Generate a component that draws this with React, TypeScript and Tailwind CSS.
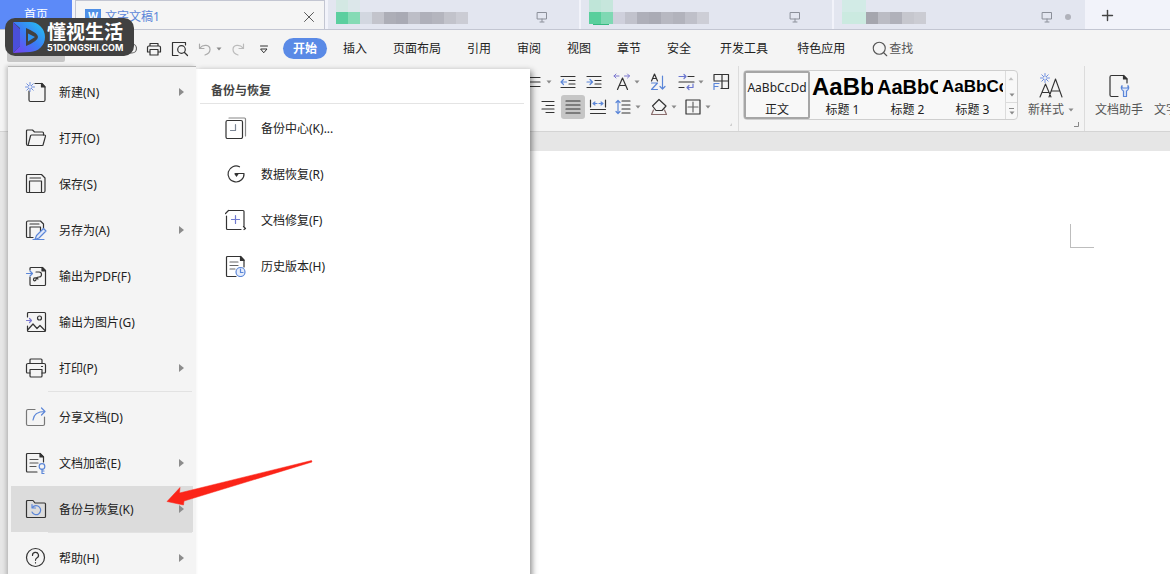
import type { ReactNode } from 'react';
import { Search, X, Plus } from 'lucide-react';

const BLUE = '#5b86d8';

const Svg = ({ children, size = 22, color = '#333' }: { children: ReactNode; size?: number; color?: string }) => (
  <svg width={size} height={size} viewBox={`0 0 ${size} ${size}`} fill="none" stroke={color} strokeWidth="1.2" strokeLinecap="round" strokeLinejoin="round" className="shrink-0">
    {children}
  </svg>
);

const Caret = () => (
  <svg width="6" height="4" viewBox="0 0 6 4" className="shrink-0"><path d="M0.5 0.5h5L3 3.5z" fill="#8a8a8a" /></svg>
);

const Star = ({ x, y }: { x: number; y: number }) => (
  <path transform={`translate(${x} ${y})`} d="M0-4.5V-1.5M0 4.5V1.5M-4.5 0H-1.5M4.5 0H1.5M-3.2-3.2l2 2M3.2 3.2l-2-2M-3.2 3.2l2-2M3.2-3.2l-2 2" stroke="#6f8fe0" strokeWidth="1" />
);

const menuIcons: Record<string, ReactNode> = {
  new: <><path d="M10 2.5h7l3 3.500v13a1.5 1.5 0 0 1-1.500 1.500H5.500a1.500 1.500 0 0 1-1.500-1.500V10" /><path d="M16.500 2.500v3.500h3.500z" fill="#333" /><Star x={5} y={6} /></>,
  open: <><path d="M3 18.500a1.500 1.500 0 0 1-1.500-1.500V4A1 1 0 0 1 2.500 3h5l2 2h8a1 1 0 0 1 1 1v2" /><path d="M3 18.500L5.500 9a1 1 0 0 1 1-1H19.500a1 1 0 0 1 1 1.200l-2.300 8.300a1 1 0 0 1-1 1z" /></>,
  save: <><path d="M2.500 1.500h14l3.500 3.500v13a1.500 1.500 0 0 1-1.500 1.500h-16a1 1 0 0 1-1-1v-16a1 1 0 0 1 1-1z" /><path d="M4.500 19.500V8h12v11.500M5 5h10.500" /></>,
  saveAs: <><path d="M8 18.500H2.500a1 1 0 0 1-1-1v-14a1.500 1.500 0 0 1 1.500-1.500h12.500l3 3v5" /><path d="M5 18.500V8h10.500v4M5 5h9" /><path d="M10 20.500l1.500-4 7-7 2.500 2.500-7 7zM8 20.500h11" stroke={BLUE} fill="#dfe8fa" /></>,
  pdf: <><path d="M5 5V3.500a1 1 0 0 1 1-1h11.500l3 3v14a1 1 0 0 1-1 1H6a1 1 0 0 1-1-1V12" /><path d="M17 2.500v3.500h3.500z" fill="#333" /><path d="M11 7h3a2.500 2.500 0 0 1 0 5c-2 0-3 1-3 2.500s-2.500 2-2.500 0 2.500-2 4.500-.5" /><path d="M1.500 8.500h6M5 6l2.500 2.500L5 11" stroke={BLUE} /></>,
  image: <><path d="M2.500 6V2.500a1 1 0 0 1 1-1h16a1 1 0 0 1 1 1v17a1 1 0 0 1-1 1h-16a1 1 0 0 1-1-1V15" /><circle cx="14.500" cy="7" r="2" /><path d="M3 18.500l5-5.500 4 4.500 3-3 5 5" /><path d="M1.500 9.500h5M4.500 7.500l2 2-2 2" stroke="#7b77cf" /></>,
  print: <><path d="M5 6.500V3a1 1 0 0 1 1-1h10a1 1 0 0 1 1 1v3.500M5 16H2.500a1 1 0 0 1-1-1V8A1.500 1.500 0 0 1 3 6.500h16a1.500 1.500 0 0 1 1.500 1.500v7a1 1 0 0 1-1 1H17M16.500 9.500h1" /><path d="M5 12.500h12V19a1 1 0 0 1-1 1H6a1 1 0 0 1-1-1z" /></>,
  share: <><path d="M10 3.500H3A1.500 1.500 0 0 0 1.500 5v13A1.500 1.500 0 0 0 3 19.500h15a1.500 1.500 0 0 0 1.500-1.500v-7" stroke="#777" /><path d="M8 14c.5-5 4-8.500 12-8.500M16.500 2L20 5.500 16.500 9" stroke={BLUE} /></>,
  lock: <><path d="M12 20H2.500a1 1 0 0 1-1-1V2.500a1 1 0 0 1 1-1h12.500l3.500 3.500v5" /><path d="M15 1.500v3.500h3.500z" fill="#333" /><path d="M5 7.500h8M5 11h8M5 14.500h6" stroke="#555" /><path d="M17 17v4.500M17 19h2M17 21.500h2" stroke={BLUE} /><circle cx="17" cy="14.500" r="2.800" stroke={BLUE} /></>,
  backup: <><path d="M1.500 18.500V3.500a1 1 0 0 1 1-1H8l2 2.500h9.500a1 1 0 0 1 1 1v12.500a1 1 0 0 1-1 1h-17a1 1 0 0 1-1-1z" /><path d="M7.500 9.500a4.500 4.500 0 1 1-.5 4.500M7 6.500v3.500h3.500" stroke={BLUE} /></>,
  help: <><circle cx="10.500" cy="10.500" r="9" /><path d="M7.500 8.500a3 3 0 1 1 4.300 2.500c-.9.500-1.300 1-1.300 2.300M10.500 15.500v.5" /></>,
  center: <><path d="M4 1h15.500a1 1 0 0 1 1 1v17" stroke="#888" /><rect x="1" y="3.500" width="16.500" height="18" rx="1.500" /><path d="M10.500 7.500v6H5.500" stroke="#7d8796" /></>,
  recover: <><path d="M14.500 3.800A8 8 0 1 0 19 10.500H10.500" /><path d="M9 10.500h5l-2.500 3.500z" fill="#333" stroke="none" /></>,
  repair: <><path d="M4 1.500h14a1 1 0 0 1 1 1v15M1.500 7v12.500a1 1 0 0 0 1 1H16M.5 4.500L3.500 1.500M18.500 17.500l2 2-1.500 1" /><path d="M10.500 6.500v8M6.500 10.500h8" stroke="#6f79d0" /></>,
  history: <><path d="M11 21.500H2.500a1 1 0 0 1-1-1v-18a1 1 0 0 1 1-1h13l3.500 3.500v7" /><path d="M15.500 1.500v4H19z" fill="#333" /><path d="M5 7h8M5 10.500h8M5 14h5" stroke="#666" /><circle cx="15.500" cy="17" r="4.500" fill="#e6edfb" stroke={BLUE} /><path d="M15.500 14v3.500h2.500" stroke={BLUE} /></>,
};

const mainMenu = [
  { icon: 'new', label: '新建(N)', arrow: true },
  { icon: 'open', label: '打开(O)' },
  { icon: 'save', label: '保存(S)' },
  { icon: 'saveAs', label: '另存为(A)', arrow: true },
  { icon: 'pdf', label: '输出为PDF(F)' },
  { icon: 'image', label: '输出为图片(G)' },
  { icon: 'print', label: '打印(P)', arrow: true },
  { icon: 'share', label: '分享文档(D)', sep: true },
  { icon: 'lock', label: '文档加密(E)', arrow: true },
  { icon: 'backup', label: '备份与恢复(K)', arrow: true, active: true },
  { icon: 'help', label: '帮助(H)', arrow: true, sep: true },
];

const subMenu = [
  { icon: 'center', label: '备份中心(K)...' },
  { icon: 'recover', label: '数据恢复(R)' },
  { icon: 'repair', label: '文档修复(F)' },
  { icon: 'history', label: '历史版本(H)' },
];

const ribbonTabs = ['插入', '页面布局', '引用', '审阅', '视图', '章节', '安全'];
const extraTabs = ['开发工具', '特色应用'];

const Monitor = () => (
  <Svg size={12} color="#8b8f99"><path d="M1.500 1.500h9v6.500h-9zM6 8v2.500M4 11h4" strokeWidth="1" /></Svg>
);

// Document tab whose title is hidden behind mosaic blocks
const BlurredTab = ({ top, blocks, dot, line }: { top: string[]; blocks: string[]; dot?: boolean; line?: boolean }) => (
  <div className="flex h-[29px] w-[251px] shrink-0 items-start justify-between bg-[#e3e6f0] pl-2">
    <div>
      <div className="flex h-3">{top.map((c, i) => <span key={i} className="w-3" style={{ background: c }} />)}</div>
      <div className="flex h-3">{blocks.map((c, i) => <span key={i} className="w-3" style={{ background: c }} />)}</div>
      {line && <div className="ml-1 h-px w-4 bg-[#35b880]" />}
    </div>
    <div className={dot ? 'flex items-center gap-3 pt-[11px] pr-[14px]' : 'flex items-center pt-[11px] pr-[31px]'}>
      <Monitor />
      {dot && <span className="size-[6px] rounded-full bg-[#b0b2ba]" />}
    </div>
  </div>
);

const Tool = ({ children, name, cls, caret, on }: { children: ReactNode; name: string; cls: string; caret?: boolean; on?: boolean }) => (
  <button aria-label={name} className={`flex h-6 shrink-0 items-center gap-[3px] ${cls} ${on ? 'justify-center rounded-[3px] bg-[#c6c6c6]' : ''}`}>
    <Svg size={18}>{children}</Svg>
    {caret && <Caret />}
  </button>
);

const StyleCard = ({ sample, name, cls }: { sample: string; name: string; cls: string }) => (
  <button className="flex w-[65px] shrink-0 flex-col items-center px-[2px]">
    <span className={`h-8 w-full overflow-hidden text-left leading-8 font-bold whitespace-nowrap text-black ${cls}`}>{sample}</span>
    <span className="leading-[14px]">{name}</span>
  </button>
);

const Watermark = () => (
  <div className="absolute top-[18px] left-[5px] z-30 flex h-[38px] w-[129px] items-center gap-px rounded-[10px] bg-[#414141] pl-[6px] text-white">
    <svg width="35" height="34" viewBox="0 0 35 34">
      <defs>
        <linearGradient id="wm" x1="0" y1="1" x2="1" y2="0">
          <stop offset="0" stopColor="#7a3df0" />
          <stop offset="0.5" stopColor="#3b7cf5" />
          <stop offset="1" stopColor="#22c8f0" />
        </linearGradient>
      </defs>
      <path d="M2 2h17a15 15 0 0 1 0 30L2 33l7-7V8z" fill="url(#wm)" />
      <path d="M2 2l7 7v17l-7 7z" fill="#4a4fd8" />
      <path d="M15 8q12 5 12 9T15 26z" fill="#414141" />
      <path d="M17 13.500l7 3.500-7 4.500z" fill="#2f93f2" />
    </svg>
    <div className="flex flex-col pt-[2px]">
      <span className="text-[19px] leading-5 font-bold">懂视生活</span>
      <span className="font-['Inter',sans-serif] text-[9px] leading-3 font-bold">51DONGSHI.COM</span>
    </div>
  </div>
);

const MenuItem = ({ icon, label, arrow, active }: { icon: string; label: string; arrow?: boolean; active?: boolean }) => (
  <button className={`mx-[3px] flex h-[46px] items-center pr-[9px] pl-[14px] text-left ${active ? 'bg-[#dcdcdc]' : ''}`}>
    <Svg>{menuIcons[icon]}</Svg>
    <span className="ml-3 flex-1 pt-[2px]">{label}</span>
    {arrow && <svg width="5" height="8" viewBox="0 0 5 8"><path d="M0 0l5 4-5 4z" fill="#8c8c8c" /></svg>}
  </button>
);

export default function App() {
  return (
    <div className="relative flex h-screen flex-col overflow-hidden bg-[#e6e6e6] font-['Noto_Sans','Noto_Sans_CJK_SC',sans-serif] text-xs text-[#222]">
      <header className="shrink-0 bg-[#f4f4f4]">
        <div className="flex h-[30px] overflow-hidden border-b border-[#c3c6d2] bg-[#f2f3fa]">
          <button className="h-[29px] w-[72px] shrink-0 bg-[#5c8af8] pt-px text-white">首页</button>
          <div className="ml-[3px] flex h-[30px] w-[250px] shrink-0 items-center border border-b-0 border-[#c3c6d2] bg-[#f5f5f5] pt-[2px] pr-[6px] pl-[9px]">
            <span className="flex size-4 items-center justify-center bg-[#4e8fe6] text-[10px] font-bold text-white">W</span>
            <span className="ml-1 flex-1 text-[#5b86d8]">文字文稿1</span>
            <button aria-label="关闭"><X size={18} strokeWidth={1.3} color="#555" /></button>
          </div>
          <div className="ml-[3px] flex shrink-0 gap-[2px]">
            <BlurredTab
              top={['#d3e8e3', '#dce7ea']}
              blocks={['#5bcf9f', '#85dbb5', '#d2d7e0', '#c3c4cc', '#adaeb7', '#a9aab4', '#bdbec7', '#afb0ba', '#b4b5be', '#c2c3cb', '#cbccd4']}
            />
            <BlurredTab
              line
              top={['#bfe5d8', '#c6e6dc']}
              blocks={['#58cf9c', '#7fd8b3', '#cfd0dc', '#c1c2cc', '#aeafb9', '#aaabb5', '#b7b8c1', '#b2b3bc', '#bfc0c9', '#cdced6']}
            />
            <BlurredTab
              dot
              top={['#d2ebe6', '#d2ebe6']}
              blocks={['#cbeae0', '#cbeae0', '#a5a6ae', '#bbbcc4', '#b0b1ba', '#c6c7ce', '#cbccd3']}
            />
          </div>
          <button aria-label="新建标签" className="shrink-0 pt-px pl-[14px]"><Plus size={17} strokeWidth={2} color="#444" /></button>
        </div>

        <nav className="flex h-9 items-center overflow-hidden pt-px whitespace-nowrap">
          <div className="flex w-[283px] shrink-0 items-center pl-[7px]">
            <button aria-label="文件" className="mt-1 h-[22px] w-[58px] rounded-[2px] bg-[#c6c6c6]" />
            <button aria-label="输出" className="mx-2 ml-[54px]"><Svg size={18} color="#666"><path d="M8 4h5a4 4 0 0 1 0 9H8" /></Svg></button>
            <button aria-label="打印"><Svg size={18}><path d="M5 6V3.500h8V6M5 12H2.500V7.500A1.500 1.500 0 0 1 4 6h10a1.500 1.500 0 0 1 1.500 1.500V12H13M5 9.500h8v5.500H5z" /></Svg></button>
            <button aria-label="打印预览" className="ml-2"><Svg size={18}><path d="M7 15.500H1.500v-13h13V5" /><circle cx="10.500" cy="9.500" r="3.800" /><path d="M13.500 12.500l3 3" /></Svg></button>
            <button aria-label="撤销" className="ml-2 flex items-center gap-[3px]"><Svg size={16} color="#aaa"><path d="M2.500 3v4.500H7M3 7c3-4 10-3.500 10 1.500 0 2.500-2 4.500-5 5.500" /></Svg><Caret /></button>
            <button aria-label="恢复" className="ml-2"><Svg size={16} color="#bbb"><path d="M13.500 3v4.500H9M13 7C10 3 3 3.500 3 8.500c0 2.500 2 4.500 5 5.500" /></Svg></button>
            <button aria-label="更多" className="ml-3"><Svg size={12}><path d="M2.500 3h7M3 6h6L6 9.500z" strokeWidth="1" /></Svg></button>
          </div>
          <button className="h-[21px] w-11 shrink-0 rounded-full bg-[#5a8ae6] font-bold text-white">开始</button>
          <div className="ml-4 flex gap-[26px] pt-px">
            {ribbonTabs.map(t => <button key={t}>{t}</button>)}
          </div>
          <div className="ml-[29px] flex gap-[29px] pt-px">
            {extraTabs.map(t => <button key={t}>{t}</button>)}
          </div>
          <button className="ml-[26px] flex shrink-0 items-center text-[#555]"><Search size={18} strokeWidth={1.5} />查找</button>
        </nav>

        <div className="flex h-[66px] overflow-hidden border-b border-[#d4d4d4] pl-[525px] whitespace-nowrap">
          <div className="flex w-[214px] shrink-0 items-end border-r border-[#dcdcdc]">
            <div className="flex-1 self-start pt-1">
              <div className="flex">
                <Tool name="项目符号" cls="w-[34px]" caret><path d="M1 4.500h14M1 9h14M1 13.500h14" /></Tool>
                <Tool name="减少缩进" cls="w-[26px]"><path d="M2 3.500h14M10 7.500h6M10 11h6M2 14.500h14" /><path d="M7.500 9H2M4.500 6.500L2 9l2.500 2.500" stroke={BLUE} /></Tool>
                <Tool name="增加缩进" cls="w-7"><path d="M2 3.500h14M10 7.500h6M10 11h6M2 14.500h14" /><path d="M2 9h5.500M5 6.500L7.500 9 5 11.500" stroke={BLUE} /></Tool>
                <Tool name="中文版式" cls="w-9" caret><path d="M4.500 16.500L9.500 5l5 11.500M6.500 12.500h6" /><path d="M1 3h5M3 1L1 3l2 2M16.500 3h-5M14.500 1l2 2-2 2" stroke="#7b77cf" strokeWidth="1" /></Tool>
                <Tool name="排序" cls="w-7"><path d="M2.500 8L5.500 1l3 7M3.500 5.500h4" /><path d="M2.500 10h6l-6 6.500h6M13.500 3v13M11 13.500l2.500 2.500 2.500-2.500" stroke={BLUE} /></Tool>
                <Tool name="制表符" cls="w-[35px]" caret><path d="M11 3.500h6M2 9h15M2 14.500h5" /><path d="M2 3.500h7M7 1.500l2 2-2 2M16 11v3.500h-6M12 12.500l-2 2 2 2" stroke="#6a76cf" /></Tool>
                <Tool name="文字框" cls="w-[18px]"><path d="M2 7V1.500h14.500v14H9M10 1.500v14M2 8h14.500" /><path d="M2 16.500v-6h5M2 13.500h4" stroke={BLUE} /></Tool>
              </div>
              <div className="flex pt-px">
                <Tool name="右对齐" cls="ml-[14px] w-[22px]"><path d="M3 3.500h12M7 7.500h8M3 11h12M7 14.500h8" /></Tool>
                <Tool name="两端对齐" cls="w-6" on><path d="M2 3h14M2 7h14M2 11h14M2 15h14" /></Tool>
                <Tool name="分散对齐" cls="ml-1 w-[25px]"><path d="M1.500 2v7M16.500 2v7M1.500 11.500h15M1.500 15.500h15" /><path d="M4 5.500h4M6 4L4 5.500 6 7M14 5.500h-4M12 4l2 1.500L12 7" stroke={BLUE} /></Tool>
                <Tool name="行距" cls="w-9" caret><path d="M8 3h8M8 7h8M8 11h8M8 15h8" /><path d="M4 2.500v13M2 4.500l2-2 2 2M2 13.500l2 2 2-2" stroke={BLUE} /></Tool>
                <Tool name="底纹" cls="w-[34px]" caret><path d="M9 1.500l7 6.500-4 4.500H6L2.500 8z" /><path d="M3.500 12l-2 4.500h15l-2-4.500" stroke="#8a6d6d" /></Tool>
                <Tool name="边框" cls="w-8" caret><path d="M2 2h14v14H2z" /><path d="M9 4v10M4 9h10" stroke="#666" /></Tool>
              </div>
            </div>
            <svg width="5" height="5" viewBox="0 0 5 5" className="mr-[6px] mb-1"><path d="M0 4.500h4.500V0" fill="none" stroke="#888" /></svg>
          </div>

          <div className="mt-1 ml-1 flex h-[50px] shrink-0 self-start rounded border border-[#cfcfcf] bg-[#f8f8f8]">
            <button className="flex w-[66px] shrink-0 flex-col items-center rounded-[2px] border-2 border-[#a6a6a6]">
              <span className="leading-[30px]">AaBbCcDd</span>
              <span className="leading-[14px]">正文</span>
            </button>
            <StyleCard sample="AaBb" name="标题 1" cls="text-[24px] font-['Liberation_Sans',sans-serif]" />
            <StyleCard sample="AaBbC" name="标题 2" cls="text-[20px] font-['Liberation_Sans',sans-serif]" />
            <StyleCard sample="AaBbCc" name="标题 3" cls="text-[17px] font-['Liberation_Sans',sans-serif]" />
            <div className="flex w-3 flex-col border-l border-[#dcdcdc]">
              <button aria-label="上一行" className="flex flex-1 rotate-180 items-center justify-center opacity-50"><Caret /></button>
              <button aria-label="下一行" className="flex flex-1 items-center justify-center"><Caret /></button>
              <button aria-label="更多样式" className="flex flex-1 flex-col items-center justify-center gap-[2px] border-t border-[#dcdcdc]"><span className="h-px w-[5px] bg-[#8a8a8a]" /><Caret /></button>
            </div>
          </div>

          <button className="ml-[10px] flex shrink-0 flex-col items-center self-start pt-[6px] text-[#555]">
            <Svg size={28}><path d="M3 25l5.500-13L14 25M5 20.500h7M12 25l6.500-18L25 25M14.500 19h8" strokeWidth="1.100" /><Star x={8} y={6} /></Svg>
            <span className="flex items-center gap-1 leading-5">新样式 <Caret /></span>
          </button>
          <svg width="5" height="5" viewBox="0 0 5 5" className="mb-1 shrink-0 self-end"><path d="M0 4.500h4.500V0" fill="none" stroke="#888" /></svg>
          <div className="ml-[5px] flex shrink-0 gap-[11px] border-l border-[#dcdcdc] pt-[6px] pl-[10px] text-[#555]">
            <button className="flex flex-col items-center self-start">
              <Svg size={28}><path d="M13 24.500H6.500A1.500 1.500 0 0 1 5 23V5A1.500 1.500 0 0 1 6.500 3.500h12l3.500 3.500v4" /><path d="M18.500 3.500v3.500h3.500z" fill="#333" /><path d="M17 13.500c-1.500 2-.5 4.500 1.500 5.500v5.500h3V19c2-1 3-3.500 1.500-5.500V16h-2l-2 0h-2z" stroke={BLUE} fill="#dfe8fa" /></Svg>
              <span className="leading-5">文档助手</span>
            </button>
            <button className="self-start pt-7 leading-5">文字工具</button>
          </div>
        </div>
      </header>

      <main className="mt-[19px] ml-[200px] flex flex-1 items-start justify-end bg-white pt-[73px] pr-[76px]">
        <div className="size-6 border-b border-l border-[#bdbdbd]" />
      </main>

      <Watermark />

      <div className="absolute top-[66px] left-2 z-20 flex">
        <div className="z-10 flex w-[188px] flex-col border-t border-[#b5b5b5] bg-[#f4f4f4] pt-[2px] shadow-[-2px_0_4px_rgba(0,0,0,0.2)]">
          {mainMenu.map(m => (
            <div key={m.label} className="flex flex-col">
              {m.sep && <div className="mr-1 ml-10 h-[3px] border-t border-[#e2e2e2]" />}
              <MenuItem icon={m.icon} label={m.label} arrow={m.arrow} active={m.active} />
            </div>
          ))}
        </div>
        <div className="mt-[3px] flex w-[334px] flex-col bg-white shadow-[2px_2px_6px_rgba(0,0,0,0.45)]">
          <h2 className="mr-[6px] mb-px ml-1 h-[35px] border-b border-[#e4e4e4] pt-[14px] pl-[11px] leading-4 font-bold text-[#444]">备份与恢复</h2>
          {subMenu.map(m => (
            <button key={m.label} className="flex h-[46px] items-center pl-[29px] text-left">
              <Svg>{menuIcons[m.icon]}</Svg>
              <span className="ml-[14px] pt-[2px]">{m.label}</span>
            </button>
          ))}
        </div>
      </div>

      <svg width="148" height="46" viewBox="0 0 148 46" className="pointer-events-none absolute top-[460px] left-[166px] z-30">
        <path d="M1 41.500L14 27.500l-.5 5.500L145.500.5l.5 1.500L18 41l-.5 4z" fill="#fb2418" stroke="#fb2418" strokeWidth="0.5" />
      </svg>
    </div>
  );
}
